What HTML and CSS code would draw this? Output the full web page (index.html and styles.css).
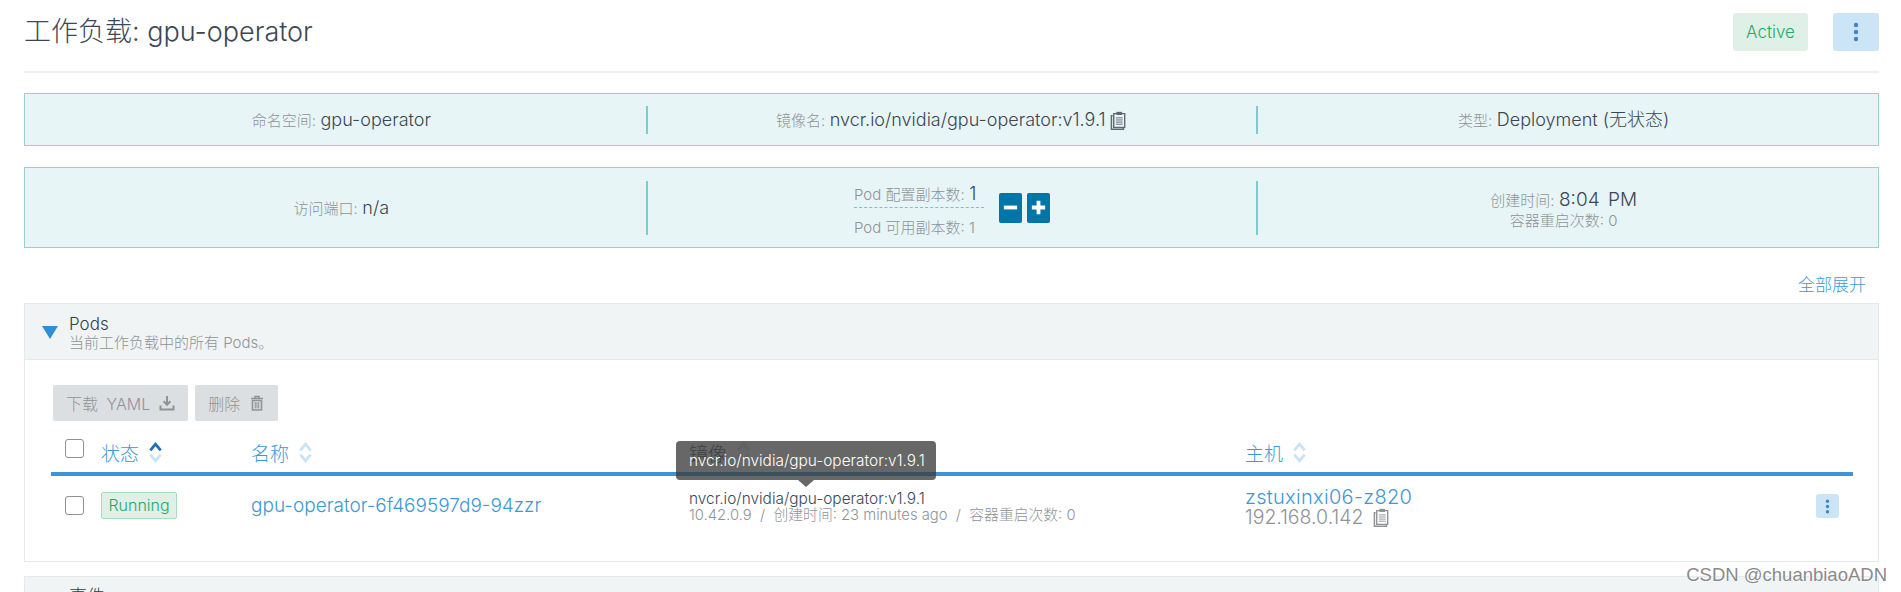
FILE: index.html
```html
<!DOCTYPE html>
<html lang="zh">
<head>
  <meta charset="UTF-8">
  <title>工作负载: gpu-operator</title>
  <link rel="stylesheet" href="styles.css">
</head>
<body>
  <svg width="0" height="0" class="defs">
    <symbol id="clip" viewBox="0 0 16 18">
      <path d="M2 4.5h-1.2v12.7h11.4v-1.4" fill="none" stroke="currentColor" stroke-width="1.4"/>
      <path d="M3 2.5h10.4v13h-10.4z" fill="#fff" fill-opacity=".25" stroke="currentColor" stroke-width="1.3"/>
      <path d="M5.5.8h5.4v3h-5.4z" fill="currentColor"/>
      <path d="M5 6.5h6.5M5 8.5h6.5M5 10.5h6.5M5 12.5h6.5" stroke="currentColor" stroke-width=".9"/>
    </symbol>
    <symbol id="sort" viewBox="0 0 14 24">
      <path class="sort-up" d="M2 10l5-6 5 6" fill="none" stroke-width="2.6"/>
      <path class="sort-down" d="M2 14l5 6 5-6" fill="none" stroke-width="2.6"/>
    </symbol>
    <symbol id="dots" viewBox="0 0 6 20">
      <circle cx="3" cy="3" r="2.2"/><circle cx="3" cy="10" r="2.2"/><circle cx="3" cy="17" r="2.2"/>
    </symbol>
  </svg>

  <div class="page">
    <header class="page-head">
      <h1>工作负载: gpu-operator</h1>
      <div class="head-actions">
        <span class="state-badge">Active</span>
        <button class="menu-btn"><svg class="dots"><use href="#dots"/></svg></button>
      </div>
    </header>

    <div class="banner banner-short">
      <div class="banner-col"><span class="label">命名空间:</span> <span class="value">gpu-operator</span></div>
      <div class="banner-col"><span class="label">镜像名:</span> <span class="value">nvcr.io/nvidia/gpu-operator:v1.9.1</span> <svg class="clip-icon"><use href="#clip"/></svg></div>
      <div class="banner-col"><span class="label">类型:</span> <span class="value">Deployment (无状态)</span></div>
    </div>

    <div class="banner banner-tall">
      <div class="banner-col"><span class="label">访问端口:</span> <span class="value">n/a</span></div>
      <div class="banner-col">
        <div class="scale">
          <div class="scale-text">
            <div class="scale-row dashed"><span class="label">Pod 配置副本数:</span> <span class="value">1</span></div>
            <div class="scale-row"><span class="label">Pod 可用副本数: 1</span></div>
          </div>
          <button class="scale-btn">
            <svg viewBox="0 0 20 20"><path d="M3 10h14" stroke="#fff" stroke-width="4"/></svg>
          </button>
          <button class="scale-btn">
            <svg viewBox="0 0 20 20"><path d="M3 10h14M10 3v14" stroke="#fff" stroke-width="4"/></svg>
          </button>
        </div>
      </div>
      <div class="banner-col stacked">
        <div><span class="label">创建时间:</span> <span class="value value-time">8:04 PM</span></div>
        <div class="label">容器重启次数: 0</div>
      </div>
    </div>

    <div class="expand-row"><a class="link">全部展开</a></div>

    <section class="box">
      <div class="box-head">
        <span class="triangle"></span>
        <div>
          <div class="box-title">Pods</div>
          <div class="box-sub">当前工作负载中的所有 Pods。</div>
        </div>
      </div>
      <div class="box-body">
        <div class="toolbar">
          <button class="tool-btn">下载 YAML
            <svg viewBox="0 0 16 16"><path d="M8 1v8M4.6 6.2L8 9.8l3.4-3.6" fill="none" stroke="currentColor" stroke-width="2"/><path d="M1.5 10.5v4h13v-4" fill="none" stroke="currentColor" stroke-width="2"/></svg>
          </button>
          <button class="tool-btn">删除
            <svg viewBox="0 0 16 16"><path d="M2 3.5h12M6 3V1.5h4V3" fill="none" stroke="currentColor" stroke-width="1.6"/><path d="M3.5 5.5h9v9.5h-9z" fill="none" stroke="currentColor" stroke-width="1.6"/><path d="M6.3 7v6.5M8 7v6.5M9.7 7v6.5" stroke="currentColor"/></svg>
          </button>
        </div>

        <div class="table-row table-head">
          <span class="checkbox"></span>
          <span class="th">状态 <svg class="sort asc"><use href="#sort"/></svg></span>
          <span class="th">名称 <svg class="sort"><use href="#sort"/></svg></span>
          <span class="th th-image">镜像 <svg class="sort"><use href="#sort"/></svg></span>
          <span class="th">主机 <svg class="sort"><use href="#sort"/></svg></span>
          <span></span>
        </div>

        <div class="table-row table-item">
          <span class="checkbox"></span>
          <span><span class="run-badge">Running</span></span>
          <a class="link pod-name">gpu-operator-6f469597d9-94zzr</a>
          <div class="image-cell">
            <div class="tooltip">nvcr.io/nvidia/gpu-operator:v1.9.1</div>
            <div class="image-name">nvcr.io/nvidia/gpu-operator:v1.9.1</div>
            <div class="image-meta">10.42.0.9 &nbsp;/&nbsp; 创建时间: 23 minutes ago &nbsp;/&nbsp; 容器重启次数: 0</div>
          </div>
          <div class="host-cell">
            <a class="link host-name">zstuxinxi06-z820</a>
            <div class="host-ip">192.168.0.142 <svg class="clip-icon"><use href="#clip"/></svg></div>
          </div>
          <button class="menu-btn menu-small"><svg class="dots"><use href="#dots"/></svg></button>
        </div>
      </div>
    </section>

    <section class="box box-next">
      <div class="box-head">
        <span class="triangle hidden"></span>
        <div class="box-title">事件</div>
      </div>
    </section>
  </div>

  <div class="watermark">CSDN @chuanbiaoADN</div>
</body>
</html>
```

FILE: styles.css
```css
:root {
  --text-color: #3b4754;
  --muted-color: #8f9396;
  --link-color: #3d98d3;
  --banner-bg: #e7f5f6;
  --banner-border: #95d0d3;
  --banner-divider: #78cdd1;
  --box-border: #e4e9ea;
  --box-head: #f0f4f5;
}

html, body {
  height: 592px;
  margin: 0;
  padding: 0;
  overflow: hidden;
  background-color: #fff;
  color: var(--text-color);
  font-family: Inter, "Noto Sans CJK SC", sans-serif;
  font-weight: 300;
}

.defs {
  position: absolute;
}

.page {
  padding: 0 22px 0 24px;
}

.page-head {
  height: 71px;
  border-bottom: 2px solid #ecf1f1;
  display: flex;
  justify-content: space-between;
  align-items: flex-start;
}

h1 {
  margin: 13px 0 0;
  font-size: 27px;
  line-height: 38px;
  font-weight: 300;
}

.head-actions {
  display: flex;
  gap: 25px;
  margin-top: 13px;
}

.state-badge {
  width: 75px;
  height: 38px;
  line-height: 38px;
  text-align: center;
  border-radius: 3px;
  background-color: #dff1e6;
  color: #27a96c;
  font-size: 17px;
}

.menu-btn {
  width: 46px;
  height: 38px;
  border: none;
  padding: 0;
  border-radius: 3px;
  background-color: #cbe4f6;
  display: flex;
  align-items: center;
  justify-content: center;
}

.dots {
  width: 6px;
  height: 20px;
  fill: #3d84c9;
}

.banner {
  margin-top: 20px;
  padding: 0 9px 0 12px;
  display: grid;
  grid-template-columns: repeat(3, 1fr);
  align-items: center;
  border: 1px solid var(--banner-border);
  background-color: var(--banner-bg);
}

.banner-short {
  height: 51px;
}

.banner-tall {
  height: 79px;
  margin-top: 21px;
}

.banner-col {
  text-align: center;
  border-right: 2px solid var(--banner-divider);
}

.banner-col:last-child {
  border-right: none;
}

.banner-short .banner-col {
  height: 28px;
  line-height: 28px;
}

.banner-tall .banner-col {
  height: 54px;
  line-height: 54px;
}

.banner-tall .banner-col.stacked {
  line-height: 20px;
  padding-top: 9px;
  height: 45px;
}

.scale {
  display: flex;
  justify-content: center;
  align-items: center;
  height: 100%;
}

.scale-text {
  width: 130px;
  margin-right: 15px;
  line-height: 20px;
  text-align: left;
}

.scale-row {
  height: 27px;
  line-height: 28px;
}

.scale-row.dashed {
  border-bottom: 1px dashed #6fc4cb;
}

.scale-row + .scale-row {
  line-height: 38px;
}

.scale-btn {
  width: 23px;
  height: 30px;
  padding: 0 2px;
  margin-right: 5px;
  border: none;
  border-radius: 2px;
  background-color: #0075a8;
}

.scale-btn:last-child {
  margin-right: 0;
}

.scale-btn svg {
  display: block;
  width: 19px;
  height: 19px;
}

.label {
  font-size: 15px;
  color: var(--muted-color);
}

.value {
  font-size: 18px;
  color: var(--text-color);
}

.value-time {
  font-size: 19px;
  word-spacing: 3px;
}

.clip-icon {
  width: 18px;
  height: 19px;
  vertical-align: -4px;
  color: #5c6872;
}

.expand-row {
  height: 55px;
  padding: 26px 13px 0 0;
  box-sizing: border-box;
  text-align: right;
  font-size: 17px;
  line-height: 22px;
}

.link {
  color: var(--link-color);
  text-decoration: none;
}

.box {
  border: 1px solid var(--box-border);
}

.box-head {
  height: 55px;
  display: flex;
  align-items: center;
  gap: 11px;
  padding-left: 17px;
  background-color: var(--box-head);
  border-bottom: 1px solid var(--box-border);
}

.triangle {
  width: 0;
  height: 0;
  margin-top: 2px;
  border-left: 8px solid transparent;
  border-right: 8px solid transparent;
  border-top: 13px solid #2f8fd6;
}

.hidden {
  visibility: hidden;
}

.box-title {
  font-size: 17px;
  line-height: 20px;
  padding-top: 1px;
  color: #333f4a;
}

.box-sub {
  font-size: 15px;
  line-height: 17px;
  color: var(--muted-color);
}

.box-body {
  height: 201px;
  padding: 25px 25px 0 26px;
  box-sizing: border-box;
}

.box-next {
  margin-top: 14px;
  height: 17px;
  border-bottom: none;
  overflow: hidden;
}

.box-next .box-head {
  align-items: flex-start;
  padding-top: 9px;
}

.box-next .box-title {
  font-size: 18px;
}

.toolbar {
  display: flex;
  gap: 7px;
  padding-left: 2px;
}

.tool-btn {
  height: 36px;
  padding: 0 13px;
  display: flex;
  align-items: center;
  gap: 9px;
  border: none;
  border-radius: 2px;
  background-color: #dcdfe2;
  color: #8f9396;
  font-family: inherit;
  font-weight: 300;
  font-size: 16px;
  word-spacing: 4px;
}

.tool-btn svg {
  width: 16px;
  height: 16px;
}

.table-row {
  display: grid;
  grid-template-columns: 36px 150px 438px 556px 1fr 23px;
  padding: 0 14px;
}

.table-head {
  height: 51px;
  align-items: center;
  border-bottom: 4px solid #3a96d8;
}

.th {
  font-size: 19px;
  color: var(--link-color);
  display: flex;
  align-items: center;
  gap: 9px;
  padding-top: 12px;
}

.th-image {
  color: #3d4a57;
}

.sort {
  width: 15px;
  height: 25px;
  --up: #c9e3f6;
  --down: #c9e3f6;
}

.sort.asc {
  --up: #1d6fb8;
}

.sort-up {
  stroke: var(--up);
}

.sort-down {
  stroke: var(--down);
}

.table-head .checkbox {
  margin-top: 4px;
}

.checkbox {
  width: 17px;
  height: 17px;
  border: 1.5px solid #8d9094;
  border-radius: 3px;
  background-color: #fff;
}

.table-item {
  padding-top: 16px;
  align-items: start;
}

.table-item .checkbox {
  margin-top: 4px;
}

.run-badge {
  display: inline-block;
  width: 76px;
  height: 27px;
  line-height: 25px;
  text-align: center;
  box-sizing: border-box;
  border: 1px solid #a8dcbd;
  border-radius: 2px;
  background-color: #dff1e6;
  color: #27a96c;
  font-size: 16px;
}

.pod-name {
  font-size: 19px;
  line-height: 27px;
}

.image-cell {
  position: relative;
}

.image-name {
  font-size: 15.4px;
  line-height: 17px;
  margin-top: -2px;
}

.image-meta {
  font-size: 14.8px;
  line-height: 16px;
  color: var(--muted-color);
  white-space: nowrap;
}

.tooltip {
  position: absolute;
  left: -13px;
  top: -51px;
  width: 260px;
  height: 39px;
  box-sizing: border-box;
  padding: 11px 0 0 13px;
  border-radius: 4px;
  background-color: rgba(60, 60, 60, 0.78);
  color: #fff;
  font-size: 15.4px;
  line-height: 17px;
  white-space: nowrap;
}

.tooltip::after {
  content: "";
  position: absolute;
  left: 50%;
  bottom: -7px;
  margin-left: -8px;
  border-left: 8px solid transparent;
  border-right: 8px solid transparent;
  border-top: 7px solid rgba(60, 60, 60, 0.78);
}

.host-name {
  display: block;
  font-size: 20px;
  letter-spacing: 0.3px;
  line-height: 20px;
  margin-top: -5px;
}

.host-ip {
  font-size: 19.5px;
  line-height: 20px;
  color: var(--muted-color);
}

.host-ip .clip-icon {
  color: #8f9396;
  margin-left: 4px;
  vertical-align: -3px;
}

.menu-small {
  width: 23px;
  height: 24px;
  margin-top: 2px;
}

.menu-small .dots {
  width: 5px;
  height: 15px;
}

.watermark {
  position: absolute;
  right: 14px;
  top: 564px;
  color: #8a8a8a;
  font-family: "Liberation Sans", sans-serif;
  font-size: 18.5px;
  line-height: 22px;
  font-weight: 400;
  text-shadow: 0 0 2px #fff, 0 0 2px #fff;
}
```
